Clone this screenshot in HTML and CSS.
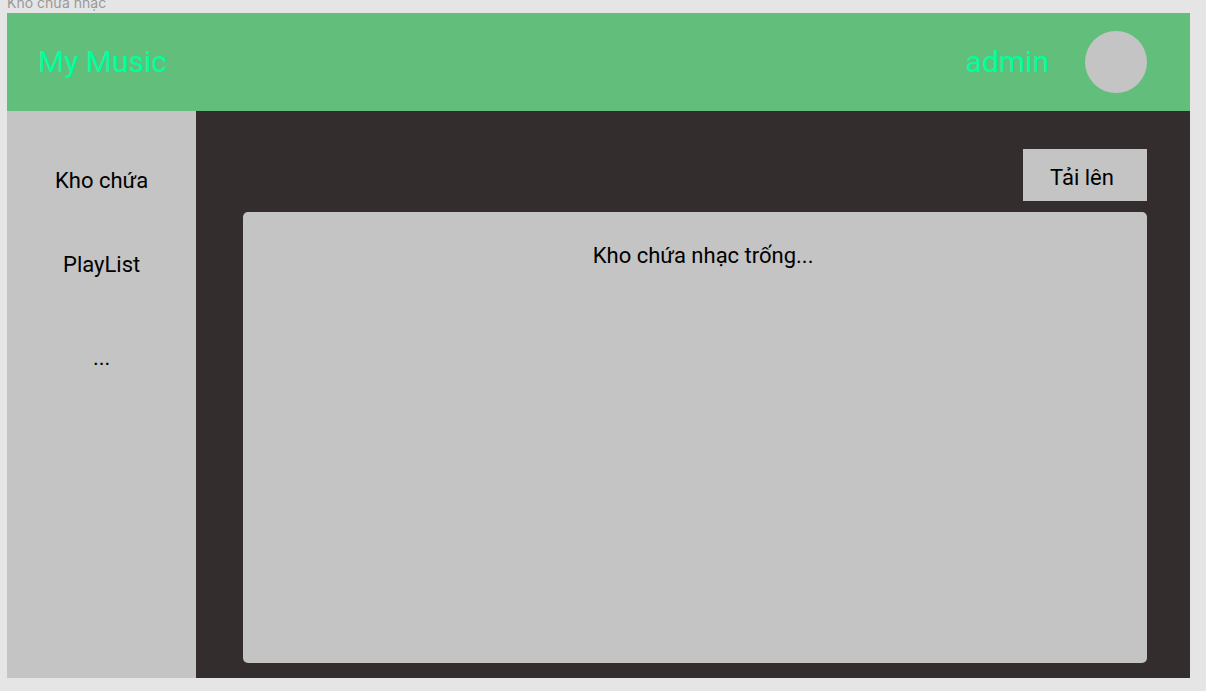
FILE: index.html
```html
<!DOCTYPE html>
<html lang="vi">
<head>
<meta charset="utf-8">
<meta name="viewport" content="width=device-width, initial-scale=1">
<title>My Music</title>
<link rel="stylesheet" href="styles.css">
</head>
<body class="canvas">
  <div class="frame-label">Kho chứa nhạc</div>
  <div class="frame">
    <header class="header">
      <h1 class="brand">My Music</h1>
      <div class="user">
        <span class="user-name">admin</span>
        <span class="avatar"></span>
      </div>
    </header>
    <div class="body">
      <nav class="sidebar">
        <a class="nav-link" href="#library">Kho chứa</a>
        <a class="nav-link" href="#playlist">PlayList</a>
        <a class="nav-link nav-more" href="#more">...</a>
      </nav>
      <main class="content">
        <button class="upload" type="button">Tải lên</button>
        <section class="panel">
          <p class="empty">Kho chứa nhạc trống...</p>
        </section>
      </main>
    </div>
  </div>
</body>
</html>
```

FILE: styles.css
```css
* {
  box-sizing: border-box;
}

.canvas {
  display: flex;
  flex-direction: column;
  min-height: 100vh;
  margin: 0;
  padding: 0 16px 13px 7px;
  background: #e5e5e5;
  color: #000;
  font-family: Roboto, "Noto Sans", sans-serif;
  font-size: 22px;
  line-height: 28px;
}

.frame-label {
  padding-bottom: 8px;
  color: #999;
  font-family: Inter, "Noto Sans", sans-serif;
  font-size: 14px;
  line-height: 5px;
}

.frame {
  display: flex;
  flex: 1;
  flex-direction: column;
  background: #332e2d;
}

.header {
  display: flex;
  align-items: center;
  justify-content: space-between;
  height: 98px;
  padding: 0 43px 0 31px;
  background: #61bf7b;
  color: #00ff9d;
  font-size: 30px;
  line-height: 36px;
}

.brand {
  margin: 0;
  font-size: inherit;
  font-weight: 400;
}

.user {
  display: flex;
  align-items: center;
  gap: 36px;
}

.avatar {
  width: 62px;
  height: 62px;
  border-radius: 50%;
  background: #c4c4c4;
}

.body {
  display: flex;
  flex: 1;
}

.sidebar {
  display: flex;
  flex-direction: column;
  align-items: center;
  gap: 56px;
  width: 16%;
  padding-top: 56px;
  background: #c4c4c4;
}

.nav-link {
  color: inherit;
  text-decoration: none;
}

.nav-more {
  padding-top: 9px;
}

.content {
  display: flex;
  flex: 1;
  flex-direction: column;
  gap: 11px;
  padding: 38px 43px 15px 47px;
}

.upload {
  align-self: flex-end;
  width: 124px;
  height: 52px;
  padding: 6px 6px 0 0;
  border: 0;
  background: #c4c4c4;
  color: inherit;
  font: inherit;
}

.panel {
  flex: 1;
  padding: 30px 0 0 16px;
  border-radius: 5px;
  background: #c4c4c4;
  text-align: center;
}

.empty {
  margin: 0;
}
```
